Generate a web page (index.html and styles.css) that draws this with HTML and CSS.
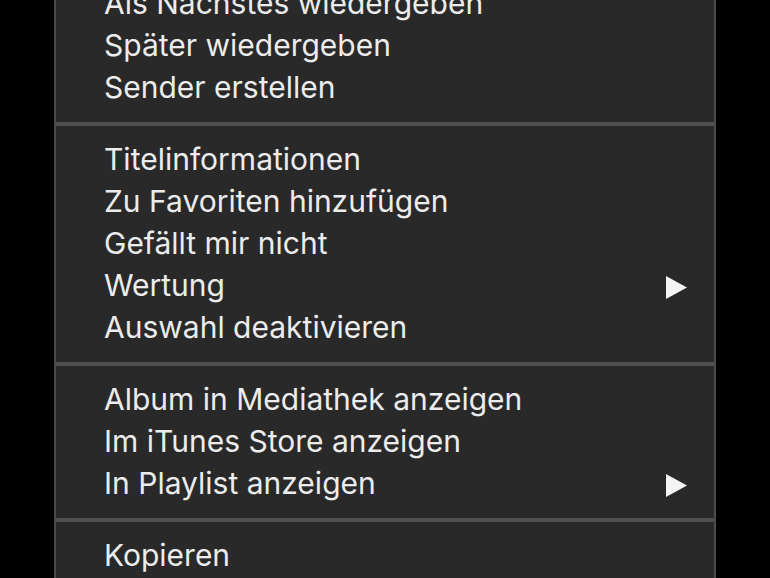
FILE: index.html
```html
<!DOCTYPE html>
<html>
    <head>
        <meta charset="utf-8">
        <title>Kontextmenü</title>
        <link rel="stylesheet" href="styles.css">
    </head>

    <body>
        <div class="contextMenu unselectable">
            <div class="menuGroup">
                <div class="menuItem">Als Nächstes wiedergeben</div>
                <div class="menuItem">Später wiedergeben</div>
                <div class="menuItem">Sender erstellen</div>
            </div>

            <div class="menuSeparator"></div>

            <div class="menuGroup">
                <div class="menuItem">Titelinformationen</div>
                <div class="menuItem">Zu Favoriten hinzufügen</div>
                <div class="menuItem">Gefällt mir nicht</div>
                <div class="menuItem hasSubmenu">
                    <span>Wertung</span>
                    <svg class="submenuArrow" viewBox="0 0 21 23"><polygon points="0,0 21,11.5 0,23"/></svg>
                </div>
                <div class="menuItem">Auswahl deaktivieren</div>
            </div>

            <div class="menuSeparator"></div>

            <div class="menuGroup">
                <div class="menuItem">Album in Mediathek anzeigen</div>
                <div class="menuItem">Im iTunes Store anzeigen</div>
                <div class="menuItem hasSubmenu">
                    <span>In Playlist anzeigen</span>
                    <svg class="submenuArrow" viewBox="0 0 21 23"><polygon points="0,0 21,11.5 0,23"/></svg>
                </div>
            </div>

            <div class="menuSeparator"></div>

            <div class="menuGroup">
                <div class="menuItem">Kopieren</div>
            </div>
        </div>
    </body>
</html>
```

FILE: styles.css
```css
html, body {
    margin: 0;
    padding: 0;
    background-color: #000000;
    overflow: hidden;
}

body {
    height: 578px;
}

.contextMenu {
    margin: -18px 0px 0px 54px;
    padding-bottom: 30px;
    width: 658px;
    background-color: #292929;
    border-left: 2px solid #4b4b4b;
    border-right: 2px solid #4b4b4b;
    font-family: Inter, "Noto Sans", sans-serif;
    font-size: 30px;
    color: #ececec;
}

.menuItem {
    display: flex;
    align-items: center;
    justify-content: space-between;
    height: 42px;
    line-height: 42px;
    padding: 0px 27px 0px 48px;
}

.submenuArrow {
    width: 21px;
    height: 23px;
    fill: #f4f4f4;
    margin-top: 5px;
}

.menuSeparator {
    height: 4px;
    background-color: #4f4f4f;
    margin: 14px 0px 12px 0px;
}

.unselectable {
    -webkit-user-select: none;
    user-select: none;
}
```
